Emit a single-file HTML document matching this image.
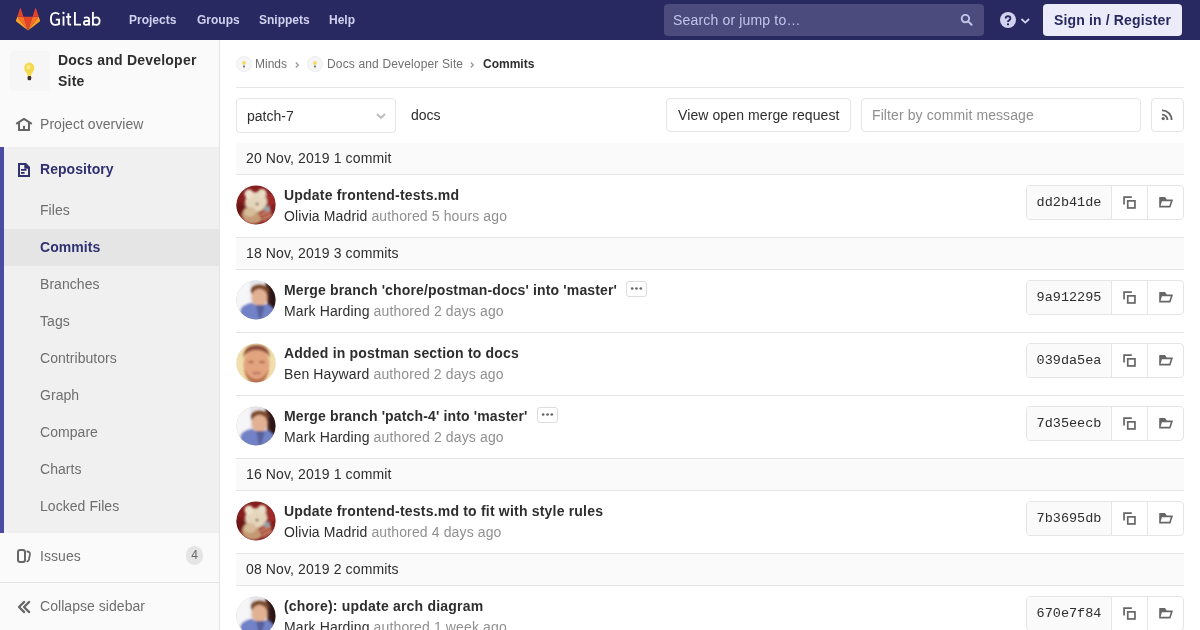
<!DOCTYPE html>
<html><head><meta charset="utf-8">
<style>
*{box-sizing:border-box;margin:0;padding:0}
html,body{width:1200px;height:630px;overflow:hidden;background:#fff;font-family:"Liberation Sans",sans-serif;font-size:14px;color:#2e2e2e}
.abs{position:absolute}
#nav{position:absolute;left:0;top:0;width:1200px;height:40px;background:#292961}
#nav .lnk{position:absolute;top:13px;font-size:12px;font-weight:bold;color:#d1d1f0;line-height:14px}
#search{position:absolute;left:664px;top:4px;width:320px;height:32px;background:#4b4b7e;border-radius:4px}
#search span{position:absolute;left:9px;top:8px;font-size:14px;color:#c4c4ea;line-height:16px;letter-spacing:0.17px}
#signin{position:absolute;left:1043px;top:4px;width:139px;height:32px;background:#ebebfa;border-radius:4px;font-weight:bold;font-size:14px;color:#292961;line-height:16px;padding-top:8px;text-align:center;letter-spacing:0.15px}
#sidebar{position:absolute;left:0;top:40px;width:220px;height:590px;background:#fafafa;border-right:1px solid #e5e5e5}
.side-item{position:absolute;left:40px;font-size:14px;color:#6e6e6e;line-height:16px;letter-spacing:0.05px}
#content{position:absolute;left:220px;top:40px;width:980px;height:590px;background:#fff}
.hdr{position:absolute;left:236px;width:948px;height:32px;background:#fafafa;border-bottom:1px solid #e5e5e5;padding:7px 10px 0;line-height:16px;color:#2e2e2e;letter-spacing:0.12px}
.row{position:absolute;left:236px;width:948px;height:63px;border-bottom:1px solid #e5e5e5}
.av{position:absolute;left:0;top:10px;width:40px;height:40px;border-radius:50%;overflow:hidden}
.ttl{position:absolute;left:48px;top:12px;font-weight:bold;letter-spacing:0.2px;line-height:16px;white-space:nowrap;color:#2e2e2e}
.ttl .ell{display:inline-block;vertical-align:top;margin-left:9px;margin-top:-1px;width:21px;height:16px;border:1px solid #dcdcdc;border-radius:3px;position:relative}
.ttl .ell i{position:absolute;top:5.6px;width:2.7px;height:2.7px;border-radius:50%;background:#666}
.aut{position:absolute;left:48px;top:33px;letter-spacing:0.13px;line-height:16px;white-space:nowrap;color:#2e2e2e}
.aut span{color:#909090}
.sha{position:absolute;left:790px;top:10px;width:158px;height:35px;border:1px solid #e5e5e5;border-radius:4px;overflow:hidden;background:#fff}
.sha .h{position:absolute;left:0;top:0;width:85px;height:33px;background:#fafafa;border-right:1px solid #e5e5e5;font-family:"Liberation Mono",monospace;font-size:13.5px;line-height:16px;padding-top:9px;text-align:center;color:#2e2e2e}
.sha .c{position:absolute;left:85px;top:0;width:36px;height:33px;border-right:1px solid #e5e5e5}
.sha svg{position:absolute}
</style></head><body><div style="will-change:transform;position:absolute;left:0;top:0;width:1200px;height:630px">
<div id="nav">
  <svg class="abs" style="left:16px;top:8px" width="24" height="24" viewBox="0 0 24 24">
    <path d="M12 22.5 L16.5 8.8 H7.5 Z" fill="#e24329"/>
    <path d="M12 22.5 L7.5 8.8 H1.2 Z" fill="#fc6d26"/>
    <path d="M1.2 8.8 L0 12.6 a0.8 0.8 0 0 0 0.3 0.9 L12 22.5 Z" fill="#fca326"/>
    <path d="M1.2 8.8 H7.5 L4.8 0.6 a0.45 0.45 0 0 0 -0.85 0 Z" fill="#e24329"/>
    <path d="M12 22.5 L16.5 8.8 H22.8 Z" fill="#fc6d26"/>
    <path d="M22.8 8.8 L24 12.6 a0.8 0.8 0 0 1 -0.3 0.9 L12 22.5 Z" fill="#fca326"/>
    <path d="M22.8 8.8 H16.5 L19.2 0.6 a0.45 0.45 0 0 1 0.85 0 Z" fill="#e24329"/>
  </svg>
  <svg class="abs" style="left:0;top:0" width="110" height="40" viewBox="0 0 110 40"><g fill="none" stroke="#fff" stroke-width="1.85">
<path d="M59.2 14.3 Q57.6 12.9 55.4 12.9 Q50.9 12.9 50.9 18.9 Q50.9 24.85 55.4 24.85 Q57.7 24.85 59.1 23.9 V19.6 H55.8"/>
<path d="M63.5 16.3 V25.6"/>
<path d="M68.4 13.3 V23 Q68.4 24.65 70 24.65 H71.1"/><path d="M66.1 16.9 H71.1"/>
<path d="M74.9 12 V24.65 H81"/>
<path d="M84 17.8 Q85.2 17.4 86.6 17.4 Q89.1 17.4 89.1 19.8 V25.6"/><path d="M89.1 21 H86.4 Q83.9 21 83.9 23 Q83.9 24.85 86 24.85 Q88.3 24.85 89.1 23.3"/>
<path d="M92.9 11.9 V25.6"/><path d="M92.9 18.9 Q94 17.4 96.2 17.4 Q99.6 17.4 99.6 21.1 Q99.6 24.85 96.2 24.85 Q94 24.85 92.9 23.5"/>
</g><circle cx="63.5" cy="13" r="1.15" fill="#fff"/></svg>
  <div class="lnk" style="left:129px">Projects</div>
  <div class="lnk" style="left:197px">Groups</div>
  <div class="lnk" style="left:259px">Snippets</div>
  <div class="lnk" style="left:329px">Help</div>
  <div id="search"><span>Search or jump to…</span>
    <svg class="abs" style="left:294px;top:8px" width="16" height="16" viewBox="0 0 16 16"><circle cx="7.4" cy="6.6" r="3.7" fill="none" stroke="#c5c5e8" stroke-width="1.9"/><path d="M10.2 9.4 L13.6 12.8" stroke="#c5c5e8" stroke-width="2" stroke-linecap="round"/></svg>
  </div>
  <svg class="abs" style="left:1000px;top:12px" width="32" height="16" viewBox="0 0 32 16">
    <circle cx="8" cy="8" r="8" fill="#d1d1f0"/>
    <path d="M5.7 6.5 Q5.7 4.2 8 4.2 Q10.4 4.2 10.4 6.3 Q10.4 7.6 9 8.3 Q8 8.8 8 10" fill="none" stroke="#292961" stroke-width="1.9" stroke-linecap="butt"/><circle cx="8" cy="12.3" r="1.15" fill="#292961"/>
    <path d="M21.5 7 L25.3 10.6 L29.1 7" fill="none" stroke="#d1d1f0" stroke-width="1.8"/>
  </svg>
  <div id="signin">Sign in / Register</div>
</div>

<div id="sidebar">
  <div class="abs" style="left:10px;top:11px;width:40px;height:40px;background:#f6f6f6;border-radius:4px"></div>
  <svg class="abs" style="left:22px;top:21px" width="16" height="20" viewBox="0 0 16 20">
    <ellipse cx="7.3" cy="7" rx="5" ry="5.6" fill="#f4d94e"/>
    <path d="M3.6 10 Q5.5 13 5.8 15.5 H9 Q9.2 13 11.1 10 Z" fill="#f4d94e"/>
    <ellipse cx="6.5" cy="6" rx="2" ry="2.6" fill="#fbe98a"/>
    <rect x="5.6" y="15" width="3.6" height="4.2" rx="1.3" fill="#3a3030"/>
  </svg>
  <div class="abs" style="left:58px;top:10px;width:170px;font-weight:bold;letter-spacing:0.22px;font-size:14px;line-height:21px;color:#2e2e2e">Docs and Developer<br>Site</div>

  <svg class="abs" style="left:12px;top:72px" width="24" height="24" viewBox="0 0 24 24"><path d="M4.2 11.8 L12 6.9 L19.8 11.8" fill="none" stroke="#666" stroke-width="2" stroke-linecap="butt" stroke-linejoin="round"/><path d="M7 10 V18 H17 V10" fill="none" stroke="#666" stroke-width="2" stroke-linejoin="miter"/><rect x="11" y="13.8" width="2" height="3.5" fill="#666"/></svg>
  <div class="side-item" style="top:76px">Project overview</div>

  <div class="abs" style="left:0;top:107px;width:219px;height:386px;background:#f0f0f0;border-left:4px solid #4b4ba3"></div>
  <div class="abs" style="left:0;top:189px;width:219px;height:37px;background:#e5e5e5;border-left:4px solid #4b4ba3"></div>
  <svg class="abs" style="left:12px;top:118px" width="24" height="24" viewBox="0 0 24 24"><path d="M7 6 H13.6 L17 9.4 V18 H7 Z" fill="none" stroke="#303072" stroke-width="2" stroke-linejoin="miter"/><path d="M13 6 V10 H17" fill="#303072" stroke="#303072" stroke-width="1.4"/><rect x="9" y="11" width="5.5" height="1.8" fill="#303072"/><rect x="9" y="14" width="3.6" height="1.8" fill="#303072"/></svg>
  <div class="side-item" style="top:121px;font-weight:bold;color:#303072">Repository</div>
  <div class="side-item" style="top:162px">Files</div>
  <div class="side-item" style="top:199px;font-weight:bold;color:#303072">Commits</div>
  <div class="side-item" style="top:236px">Branches</div>
  <div class="side-item" style="top:273px">Tags</div>
  <div class="side-item" style="top:310px">Contributors</div>
  <div class="side-item" style="top:347px">Graph</div>
  <div class="side-item" style="top:384px">Compare</div>
  <div class="side-item" style="top:421px">Charts</div>
  <div class="side-item" style="top:458px">Locked Files</div>

  <svg class="abs" style="left:12px;top:504px" width="24" height="24" viewBox="0 0 24 24"><rect x="6" y="6" width="7" height="12" rx="2.2" fill="none" stroke="#666" stroke-width="2"/><path d="M15.3 7.5 C17.4 7.7 18.1 8.7 17.9 10.4 L17 15.4 C16.8 16.6 16.2 17.1 15.3 17.3" fill="none" stroke="#666" stroke-width="1.8" stroke-linecap="round"/></svg>
  <div class="side-item" style="top:508px">Issues</div>
  <div class="abs" style="left:186px;top:506px;width:17px;height:19px;border-radius:9px;background:#e5e5e5;color:#666;font-size:12px;line-height:19px;text-align:center">4</div>

  <div class="abs" style="left:0;top:542px;width:219px;height:1px;background:#e5e5e5"></div>
  <svg class="abs" style="left:12px;top:555px" width="24" height="24" viewBox="0 0 24 24"><path d="M12.2 6.9 L7 12 L12.2 17.1 M17.2 6.9 L12 12 L17.2 17.1" fill="none" stroke="#666" stroke-width="2.2" stroke-linecap="round" stroke-linejoin="round"/></svg>
  <div class="side-item" style="top:558px">Collapse sidebar</div>
</div>
<svg width="0" height="0" style="position:absolute">
 <defs>
  <clipPath id="cc"><circle cx="20" cy="20" r="19.6"/></clipPath>
  <filter id="bl" x="-20%" y="-20%" width="140%" height="140%"><feGaussianBlur stdDeviation="1.1"/></filter>
  <filter id="bl2" x="-20%" y="-20%" width="140%" height="140%"><feGaussianBlur stdDeviation="0.6"/></filter>
  <g id="olivia"><g clip-path="url(#cc)">
    <rect width="40" height="40" fill="#861e1e"/>
    <g filter="url(#bl)">
    <circle cx="35" cy="14" r="6" fill="#a02c2c"/>
    <circle cx="4" cy="24" r="6" fill="#6e1414"/>
    <ellipse cx="17" cy="30" rx="11" ry="9" fill="#c49a74"/>
    <ellipse cx="20" cy="17" rx="11" ry="10" fill="#e4d6bc"/>
    <ellipse cx="13" cy="9" rx="4.5" ry="4.5" fill="#ece2cc"/>
    <ellipse cx="26" cy="8.5" rx="4.5" ry="4.5" fill="#e8dcc4"/>
    <ellipse cx="14" cy="27" rx="6" ry="5" fill="#d6bc98"/>
    <path d="M22 27 L33 22 L37 33 L27 38 Z" fill="#a65040"/>
    <path d="M25 30 L35 25.5 M26.5 34 L36 29.5" stroke="#cf8a70" stroke-width="1.4"/>
    <rect x="28" y="21" width="6" height="5" fill="#96a0a8"/>
    <circle cx="21" cy="19" r="1.5" fill="#8a6a52"/>
    </g>
  </g><circle cx="20" cy="20" r="19.6" fill="none" stroke="rgba(0,0,0,0.08)" stroke-width="0.8"/></g>
  <g id="mark"><g clip-path="url(#cc)">
    <rect width="40" height="40" fill="#e4e4ea"/>
    <g filter="url(#bl)">
    <rect x="-2" y="-2" width="16" height="44" fill="#f6f6f8"/>
    <path d="M29 -2 H42 V34 L32 31 Z" fill="#4c2826"/>
    <path d="M33 4 H42 V28 H35 Z" fill="#2c1616"/>
    <ellipse cx="23.5" cy="10.5" rx="9" ry="6" fill="#7a482c"/>
    <ellipse cx="23.5" cy="17.5" rx="7.8" ry="8.8" fill="#e2b092"/>
    <path d="M2 42 L5 28 Q10 23 16 23 Q23 28 31 24 Q37 27 40 33 L42 42 Z" fill="#7282c6"/>
    <path d="M20 25 L24 42 L29 25 Z" fill="#56609a"/>
    </g>
  </g><circle cx="20" cy="20" r="19.6" fill="none" stroke="rgba(0,0,0,0.06)" stroke-width="0.8"/></g>
  <g id="ben"><g clip-path="url(#cc)">
    <rect width="40" height="40" fill="#f0dfab"/>
    <g filter="url(#bl)">
    <ellipse cx="20.5" cy="22" rx="13" ry="17" fill="#e2a47e"/>
    <path d="M7 15 Q8 2 20.5 2 Q33 2 34 15 Q30 7 20.5 7 Q11 7 7 15Z" fill="#8e4e3c"/>
    <path d="M8 26 Q11 41 20.5 41 Q30 41 33 26 Q28 36 20.5 36 Q13 36 8 26Z" fill="#b8704e"/>
    <ellipse cx="15" cy="19" rx="3" ry="1.2" fill="#a86850"/>
    <ellipse cx="26" cy="19" rx="3" ry="1.2" fill="#a86850"/>
    <ellipse cx="20.5" cy="30" rx="4.5" ry="1.5" fill="#c27a68"/>
    </g>
  </g><circle cx="20" cy="20" r="19.6" fill="none" stroke="rgba(0,0,0,0.06)" stroke-width="0.8"/></g>
 </defs>
</svg>
<div id="content"></div>
<svg class="abs" style="left:236px;top:56px" width="16" height="16" viewBox="0 0 16 16"><circle cx="8" cy="8" r="7.5" fill="#f6f6f6" stroke="#eeeeee"/><ellipse cx="8" cy="7" rx="1.8" ry="2.1" fill="#f3da60"/><rect x="7" y="9.6" width="2" height="1.8" fill="#777"/></svg>
<div class="abs" style="left:255px;top:57px;font-size:12px;line-height:14px;color:#707070">Minds</div>
<svg class="abs" style="left:294px;top:60.5px" width="6" height="8" viewBox="0 0 6 8"><path d="M1.8 1.5 L4.3 4 L1.8 6.5" fill="none" stroke="#999" stroke-width="1.3"/></svg>
<svg class="abs" style="left:307px;top:56px" width="16" height="16" viewBox="0 0 16 16"><circle cx="8" cy="8" r="7.5" fill="#f6f6f6" stroke="#eeeeee"/><ellipse cx="8" cy="7" rx="1.8" ry="2.1" fill="#f3da60"/><rect x="7" y="9.6" width="2" height="1.8" fill="#777"/></svg>
<div class="abs" style="left:327px;top:57px;font-size:12px;line-height:14px;color:#707070;letter-spacing:0.15px">Docs and Developer Site</div>
<svg class="abs" style="left:469px;top:60.5px" width="6" height="8" viewBox="0 0 6 8"><path d="M1.8 1.5 L4.3 4 L1.8 6.5" fill="none" stroke="#999" stroke-width="1.3"/></svg>
<div class="abs" style="left:483px;top:57px;font-size:12px;line-height:14px;color:#2e2e2e;font-weight:bold">Commits</div>
<div class="abs" style="left:236px;top:87px;width:948px;height:1px;background:#e5e5e5"></div>

<div class="abs" style="left:236px;top:98px;width:160px;height:35px;border:1px solid #e5e5e5;border-radius:4px;background:#fff"></div>
<div class="abs" style="left:247px;top:108px;line-height:16px;color:#2e2e2e">patch-7</div>
<svg class="abs" style="left:375px;top:110px" width="12" height="12" viewBox="0 0 12 12"><path d="M2 4 L6 8 L10 4" fill="none" stroke="#bababa" stroke-width="1.8"/></svg>
<div class="abs" style="left:411px;top:107px;line-height:16px;color:#2e2e2e">docs</div>
<div class="abs" style="left:666px;top:98px;width:185px;height:34px;border:1px solid #e5e5e5;border-radius:4px;background:#fff;line-height:16px;padding:8px 0 0 11px;color:#2e2e2e;letter-spacing:0.1px">View open merge request</div>
<div class="abs" style="left:861px;top:98px;width:280px;height:34px;border:1px solid #e5e5e5;border-radius:4px;background:#fff;line-height:16px;padding:8px 0 0 10px;color:#8f8f8f;letter-spacing:0.1px">Filter by commit message</div>
<div class="abs" style="left:1151px;top:98px;width:33px;height:34px;border:1px solid #e5e5e5;border-radius:4px;background:#fff"></div>
<svg class="abs" style="left:1161px;top:109px" width="12" height="12" viewBox="0 0 12 12"><circle cx="2.2" cy="9.6" r="1.6" fill="#666"/><path d="M1 5.6 A5.2 5.2 0 0 1 6.4 11" fill="none" stroke="#666" stroke-width="1.9"/><path d="M1 1.4 A9.4 9.4 0 0 1 10.6 11" fill="none" stroke="#666" stroke-width="1.9"/></svg>
<div class="hdr" style="top:143px">20 Nov, 2019 1 commit</div>
<div class="row" style="top:175px">
  <svg class="av" width="40" height="40" viewBox="0 0 40 40"><use href="#olivia"/></svg>
  <div class="ttl">Update frontend-tests.md</div>
  <div class="aut">Olivia Madrid <span>authored 5 hours ago</span></div>
  <div class="sha"><div class="h">dd2b41de</div><div class="c"></div>
    <svg style="left:96px;top:10px" width="14" height="14" viewBox="0 0 14 14"><path d="M1.05 8.6 V1.05 H8.8" fill="none" stroke="#666" stroke-width="1.7"/><rect x="4.75" y="4.85" width="7.2" height="7.1" fill="none" stroke="#666" stroke-width="1.7"/></svg>
    <svg style="left:131px;top:10px" width="16" height="13" viewBox="0 0 16 13"><path d="M1.2 11.4 V1.6 Q1.2 1.1 1.7 1.1 H7 L8.8 3.4 H14.4 Q14.9 3.4 14.9 4 L12.4 11.4 Z" fill="#666"/><path d="M3.9 5.3 H12.8 L11.3 9.7 H2.6 Z" fill="#fff"/></svg>
  </div>
</div>
<div class="hdr" style="top:238px">18 Nov, 2019 3 commits</div>
<div class="row" style="top:270px">
  <svg class="av" width="40" height="40" viewBox="0 0 40 40"><use href="#mark"/></svg>
  <div class="ttl" style="letter-spacing:0.15px">Merge branch 'chore/postman-docs' into 'master'<span class="ell"><svg style="position:absolute;left:0;top:0" width="19" height="14" viewBox="0 0 19 14"><circle cx="5.2" cy="6.5" r="1.35" fill="#666"/><circle cx="9.5" cy="6.5" r="1.35" fill="#666"/><circle cx="13.8" cy="6.5" r="1.35" fill="#666"/></svg></span></div>
  <div class="aut">Mark Harding <span>authored 2 days ago</span></div>
  <div class="sha"><div class="h">9a912295</div><div class="c"></div>
    <svg style="left:96px;top:10px" width="14" height="14" viewBox="0 0 14 14"><path d="M1.05 8.6 V1.05 H8.8" fill="none" stroke="#666" stroke-width="1.7"/><rect x="4.75" y="4.85" width="7.2" height="7.1" fill="none" stroke="#666" stroke-width="1.7"/></svg>
    <svg style="left:131px;top:10px" width="16" height="13" viewBox="0 0 16 13"><path d="M1.2 11.4 V1.6 Q1.2 1.1 1.7 1.1 H7 L8.8 3.4 H14.4 Q14.9 3.4 14.9 4 L12.4 11.4 Z" fill="#666"/><path d="M3.9 5.3 H12.8 L11.3 9.7 H2.6 Z" fill="#fff"/></svg>
  </div>
</div>
<div class="row" style="top:333px">
  <svg class="av" width="40" height="40" viewBox="0 0 40 40"><use href="#ben"/></svg>
  <div class="ttl">Added in postman section to docs</div>
  <div class="aut">Ben Hayward <span>authored 2 days ago</span></div>
  <div class="sha"><div class="h">039da5ea</div><div class="c"></div>
    <svg style="left:96px;top:10px" width="14" height="14" viewBox="0 0 14 14"><path d="M1.05 8.6 V1.05 H8.8" fill="none" stroke="#666" stroke-width="1.7"/><rect x="4.75" y="4.85" width="7.2" height="7.1" fill="none" stroke="#666" stroke-width="1.7"/></svg>
    <svg style="left:131px;top:10px" width="16" height="13" viewBox="0 0 16 13"><path d="M1.2 11.4 V1.6 Q1.2 1.1 1.7 1.1 H7 L8.8 3.4 H14.4 Q14.9 3.4 14.9 4 L12.4 11.4 Z" fill="#666"/><path d="M3.9 5.3 H12.8 L11.3 9.7 H2.6 Z" fill="#fff"/></svg>
  </div>
</div>
<div class="row" style="top:396px">
  <svg class="av" width="40" height="40" viewBox="0 0 40 40"><use href="#mark"/></svg>
  <div class="ttl" style="letter-spacing:0.15px">Merge branch 'patch-4' into 'master'<span class="ell"><svg style="position:absolute;left:0;top:0" width="19" height="14" viewBox="0 0 19 14"><circle cx="5.2" cy="6.5" r="1.35" fill="#666"/><circle cx="9.5" cy="6.5" r="1.35" fill="#666"/><circle cx="13.8" cy="6.5" r="1.35" fill="#666"/></svg></span></div>
  <div class="aut">Mark Harding <span>authored 2 days ago</span></div>
  <div class="sha"><div class="h">7d35eecb</div><div class="c"></div>
    <svg style="left:96px;top:10px" width="14" height="14" viewBox="0 0 14 14"><path d="M1.05 8.6 V1.05 H8.8" fill="none" stroke="#666" stroke-width="1.7"/><rect x="4.75" y="4.85" width="7.2" height="7.1" fill="none" stroke="#666" stroke-width="1.7"/></svg>
    <svg style="left:131px;top:10px" width="16" height="13" viewBox="0 0 16 13"><path d="M1.2 11.4 V1.6 Q1.2 1.1 1.7 1.1 H7 L8.8 3.4 H14.4 Q14.9 3.4 14.9 4 L12.4 11.4 Z" fill="#666"/><path d="M3.9 5.3 H12.8 L11.3 9.7 H2.6 Z" fill="#fff"/></svg>
  </div>
</div>
<div class="hdr" style="top:459px">16 Nov, 2019 1 commit</div>
<div class="row" style="top:491px">
  <svg class="av" width="40" height="40" viewBox="0 0 40 40"><use href="#olivia"/></svg>
  <div class="ttl">Update frontend-tests.md to fit with style rules</div>
  <div class="aut">Olivia Madrid <span>authored 4 days ago</span></div>
  <div class="sha"><div class="h">7b3695db</div><div class="c"></div>
    <svg style="left:96px;top:10px" width="14" height="14" viewBox="0 0 14 14"><path d="M1.05 8.6 V1.05 H8.8" fill="none" stroke="#666" stroke-width="1.7"/><rect x="4.75" y="4.85" width="7.2" height="7.1" fill="none" stroke="#666" stroke-width="1.7"/></svg>
    <svg style="left:131px;top:10px" width="16" height="13" viewBox="0 0 16 13"><path d="M1.2 11.4 V1.6 Q1.2 1.1 1.7 1.1 H7 L8.8 3.4 H14.4 Q14.9 3.4 14.9 4 L12.4 11.4 Z" fill="#666"/><path d="M3.9 5.3 H12.8 L11.3 9.7 H2.6 Z" fill="#fff"/></svg>
  </div>
</div>
<div class="hdr" style="top:554px">08 Nov, 2019 2 commits</div>
<div class="row" style="top:586px">
  <svg class="av" width="40" height="40" viewBox="0 0 40 40"><use href="#mark"/></svg>
  <div class="ttl">(chore): update arch diagram</div>
  <div class="aut">Mark Harding <span>authored 1 week ago</span></div>
  <div class="sha"><div class="h">670e7f84</div><div class="c"></div>
    <svg style="left:96px;top:10px" width="14" height="14" viewBox="0 0 14 14"><path d="M1.05 8.6 V1.05 H8.8" fill="none" stroke="#666" stroke-width="1.7"/><rect x="4.75" y="4.85" width="7.2" height="7.1" fill="none" stroke="#666" stroke-width="1.7"/></svg>
    <svg style="left:131px;top:10px" width="16" height="13" viewBox="0 0 16 13"><path d="M1.2 11.4 V1.6 Q1.2 1.1 1.7 1.1 H7 L8.8 3.4 H14.4 Q14.9 3.4 14.9 4 L12.4 11.4 Z" fill="#666"/><path d="M3.9 5.3 H12.8 L11.3 9.7 H2.6 Z" fill="#fff"/></svg>
  </div>
</div>

</div></body></html>
